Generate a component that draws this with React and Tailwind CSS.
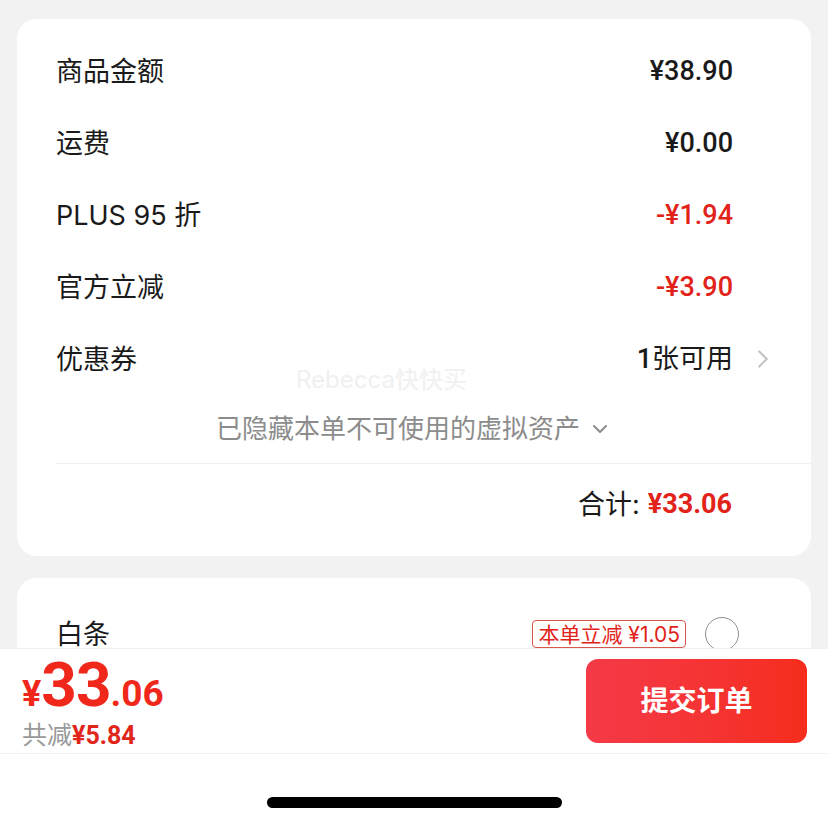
import { ChevronRight, ChevronDown } from "lucide-react";

const FONT = { fontFamily: 'Inter, "Noto Sans CJK SC", sans-serif' };
const NUM = { fontFamily: 'Roboto, "Noto Sans CJK SC", sans-serif' };

const ROWS = [
  { label: "商品金额", value: "¥38.90" },
  { label: "运费", value: "¥0.00" },
  { label: "PLUS 95 折", value: "-¥1.94", red: true },
  { label: "官方立减", value: "-¥3.90", red: true },
];

const App = () => {
  return (
    <div
      className="relative w-[828px] h-[826px] overflow-hidden bg-[#f2f2f2] pt-[19px] px-[17px]"
      style={FONT}
    >
      {/* Price breakdown */}
      <div className="relative bg-white rounded-[20px] pt-4 pb-3">
        {ROWS.map((row) => (
          <div
            key={row.label}
            className="flex items-center h-[72px] pl-[39px] pr-[42px]"
          >
            <span className="flex-1 text-[27px] leading-none text-[#1a1a1a]">
              {row.label}
            </span>
            <span
              className={`text-[27px] leading-none font-medium ${
                row.red ? "text-[#e2231a]" : "text-[#1a1a1a]"
              }`}
              style={NUM}
            >
              {row.value}
            </span>
            <span className="w-[36px]"></span>
          </div>
        ))}

        {/* Coupons */}
        <div className="flex items-center h-[72px] pl-[39px] pr-[42px]">
          <span className="flex-1 text-[27px] leading-none text-[#1a1a1a]">
            优惠券
          </span>
          <span className="text-[27px] leading-none text-[#1a1a1a]">
            <span className="font-medium" style={NUM}>
              1
            </span>
            张可用
          </span>
          <span className="w-[36px] flex justify-end">
            <ChevronRight
              size={30}
              strokeWidth={1.8}
              className="text-[#c4c4c4] -mr-[9px]"
            />
          </span>
        </div>

        {/* Watermark */}
        <div className="absolute left-[279px] top-[349px] text-[24px] leading-none text-[#f0f0f0] pointer-events-none">
          Rebecca快快买
        </div>

        {/* Hidden assets */}
        <div className="flex items-center justify-center h-[68px] text-[26px] leading-none text-[#8c8c8c]">
          <span>已隐藏本单不可使用的虚拟资产</span>
          <ChevronDown
            size={24}
            strokeWidth={2}
            className="ml-[8px] text-[#8c8c8c]"
          />
        </div>

        <div className="ml-[39px] h-px bg-[#f0f0f0]"></div>

        {/* Total */}
        <div className="flex items-center justify-end h-[80px] pr-[79px]">
          <span className="text-[27px] leading-none text-[#1a1a1a]">合计:</span>
          <span
            className="ml-[8px] text-[27px] leading-none font-bold text-[#e2231a]"
            style={NUM}
          >
            ¥33.06
          </span>
        </div>
      </div>

      {/* Payment methods */}
      <div className="mt-[22px] bg-white rounded-[20px] pt-5 h-[200px]">
        <div className="flex items-center h-[72px] pl-[39px] pr-[72px]">
          <span className="flex-1 text-[27px] leading-none text-[#1a1a1a]">
            白条
          </span>
          <span className="border border-[#d8574c] rounded-[4px] h-[28px] px-[5px] flex items-center text-[21px] leading-none text-[#e2231a]">
            本单立减 ¥1.05
          </span>
          <span className="ml-[19px] w-[34px] h-[34px] rounded-full border border-[#8f8f8f]"></span>
        </div>
      </div>

      {/* Bottom bar */}
      <div className="absolute left-0 right-0 bottom-0 h-[178px] bg-white border-t border-[#efefef]">
        <div className="flex items-center justify-between h-[105px] pl-[22px] pr-[21px] border-b border-[#f2f2f2]">
          <div className="flex flex-col">
            <div
              className="flex items-baseline font-bold text-[#f0281c] leading-none"
              style={NUM}
            >
              <span className="text-[36px]">¥</span>
              <span className="text-[62px] tracking-[-1px]">33</span>
              <span className="text-[37px]">.06</span>
            </div>
            <div className="flex items-baseline mt-[7px] text-[25px] leading-none">
              <span className="text-[#999999]">共减</span>
              <span className="font-bold text-[#e1251b]" style={NUM}>
                ¥5.84
              </span>
            </div>
          </div>
          <button className="w-[221px] h-[84px] rounded-[12px] bg-gradient-to-r from-[#f43a47] to-[#f62d1c] text-white text-[28px] font-bold">
            提交订单
          </button>
        </div>
        <div className="flex justify-center mt-[43px]">
          <div className="w-[295px] h-[11px] rounded-full bg-black"></div>
        </div>
      </div>
    </div>
  );
};

export default App;
